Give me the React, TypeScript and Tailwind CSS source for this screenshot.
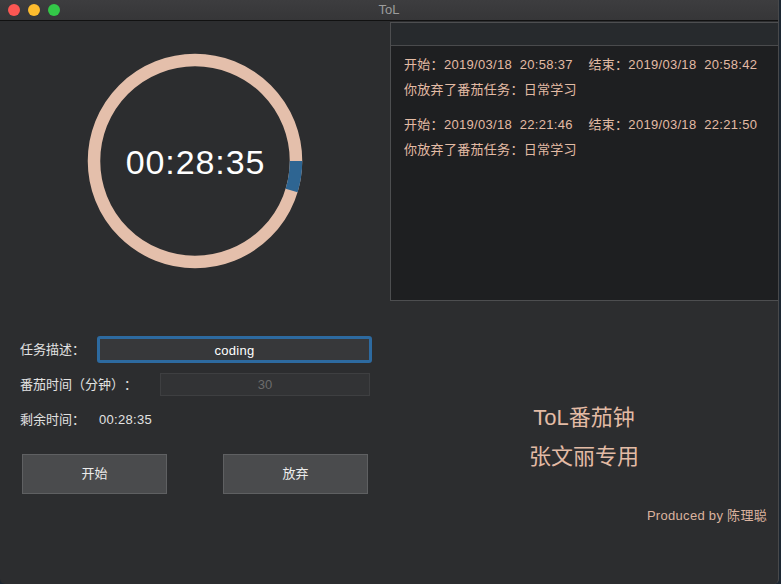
const font = "font-['Liberation_Sans','Noto_Sans_CJK_SC',sans-serif] [text-spacing-trim:space-all]";

const logs = [
  { start: "2019/03/18  20:58:37", end: "2019/03/18  20:58:42", task: "日常学习" },
  { start: "2019/03/18  22:21:46", end: "2019/03/18  22:21:50", task: "日常学习" },
];

function Ring() {
  const r = 101;
  const c = 2 * Math.PI * r;
  const done = c * (85 / 1800);
  return (
    <div className="relative w-[220px] h-[220px]">
      <svg width="220" height="220" viewBox="0 0 220 220">
        <circle cx="110" cy="110" r={r} fill="none" stroke="#e4bfab" strokeWidth="12.5" />
        <circle
          cx="110"
          cy="110"
          r={r}
          fill="none"
          stroke="#2e6592"
          strokeWidth="12.5"
          strokeDasharray={`${done} ${c}`}
        />
      </svg>
      <div className="absolute inset-0 flex items-center justify-center pt-[2px] pl-[1px] text-[34px] text-white tracking-[0.9px]">
        00:28:35
      </div>
    </div>
  );
}

export default function App() {
  return (
    <div className={`w-[781px] h-[584px] bg-[#1c2631] ${font}`}>
      <div className="w-[779px] h-[584px] bg-[#2c2d2f] rounded-b-[5px] border-r border-[#48494b] overflow-hidden flex flex-col">
        {/* title bar */}
        <div className="h-[21px] shrink-0 relative flex items-center justify-center bg-gradient-to-b from-[#3d3d3f] to-[#363638] border-b border-[#111]">
          <div className="absolute left-[8px] top-[4px] flex gap-[8px]">
            <span className="w-[12px] h-[12px] rounded-full bg-[#fc5753]" />
            <span className="w-[12px] h-[12px] rounded-full bg-[#fdbc2e]" />
            <span className="w-[12px] h-[12px] rounded-full bg-[#33c748]" />
          </div>
          <span className="text-[13px] text-[#9c9c9c]">ToL</span>
        </div>

        <div className="flex flex-1">
          {/* left column */}
          <div className="w-[390px] shrink-0 flex flex-col">
            <div className="mt-[30px] ml-[85px]">
              <Ring />
            </div>

            <div className="mt-[65px] flex items-center h-[27px] text-[13px] text-[#e2e2e2]">
              <span className="ml-[20px] w-[77px]">任务描述：</span>
              <div className="w-[275px] h-[27px] pt-[2px] rounded-[3px] border-[3px] border-[#2d6aa0] bg-[#37383a] flex items-center justify-center text-white tracking-[0.3px]">
                coding
              </div>
            </div>

            <div className="mt-[10px] flex items-center h-[23px] text-[13px] text-[#e2e2e2]">
              <span className="ml-[20px] w-[140px] whitespace-pre">番茄时间（分钟）：</span>
              <div className="w-[210px] h-[23px] pt-[1px] border border-[#3e3f41] bg-[#323335] flex items-center justify-center text-[#6c6c6c]">
                30
              </div>
            </div>

            <div className="mt-[14px] flex items-center h-[20px] text-[13px] text-[#e2e2e2]">
              <span className="ml-[20px] w-[79px]">剩余时间：</span>
              <span className="tracking-[0.3px]">00:28:35</span>
            </div>

            <div className="mt-[24px] flex gap-[56px] ml-[22px]">
              <button className="w-[145px] h-[40px] bg-[#4a4b4d] border border-[#5f6062] text-[13px] text-[#ececec]">
                开始
              </button>
              <button className="w-[145px] h-[40px] bg-[#4a4b4d] border border-[#5f6062] text-[13px] text-[#ececec]">
                放弃
              </button>
            </div>
          </div>

          {/* right column */}
          <div className="flex-1 flex flex-col">
            <div className="mt-[1px] h-[279px] border border-[#4d4e50] border-r-0 flex flex-col bg-[#1e1f21]">
              <div className="h-[23px] shrink-0 bg-[#272a2d] border-b border-[#4a4b4d]" />
              <div className="pt-[6px] pl-[13px] text-[13px] text-[#e3bba5] tracking-[0.3px]">
                {logs.map((l, i) => (
                  <div key={i} className={i > 0 ? "mt-[10px]" : ""}>
                    <div className="h-[25px] flex items-center whitespace-pre">
                      开始：{l.start}{"    "}结束：{l.end}
                    </div>
                    <div className="h-[25px] flex items-center">你放弃了番茄任务：{l.task}</div>
                  </div>
                ))}
              </div>
            </div>

            <div className="mt-[101px] flex flex-col items-center text-[22px] text-[#e3bba5]">
              <div className="h-[30px] flex items-center">ToL番茄钟</div>
              <div className="mt-[9px] h-[30px] flex items-center">张文丽专用</div>
            </div>

            <div className="mt-[35px] pr-[11px] flex justify-end text-[13px] text-[#dbb39f] tracking-[0.3px]">
              Produced by 陈理聪
            </div>
          </div>
        </div>
      </div>
    </div>
  );
}
